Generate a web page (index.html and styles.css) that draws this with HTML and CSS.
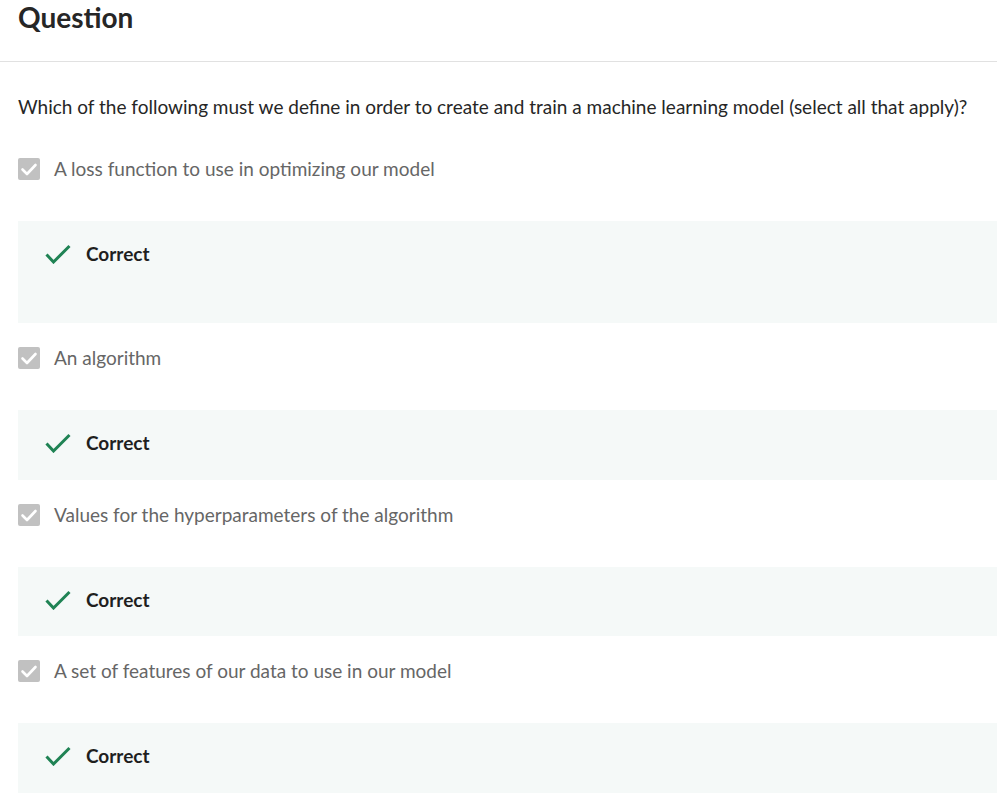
FILE: index.html
```html
<!DOCTYPE html>
<html lang="en">
<head>
<meta charset="utf-8">
<title>Question</title>
<link rel="stylesheet" href="styles.css">
</head>
<body>
<div class="page">
  <header class="head">
    <h2 class="title">Question</h2>
  </header>
  <div class="body">
    <p class="prompt">Which of the following must we define in order to create and train a machine learning model (select all that apply)?</p>

    <div class="option">
      <span class="box"><svg viewBox="0 0 22 22" width="22" height="22"><path d="M4.5 11.5l4.5 4.5 8.5-9" fill="none" stroke="#fff" stroke-width="2.6" stroke-linecap="round" stroke-linejoin="round"/></svg></span>
      <span class="label">A loss function to use in optimizing our model</span>
    </div>
    <div class="feedback tall">
      <div class="fb-row">
        <svg class="tick" viewBox="0 0 26 20" width="26" height="20"><path d="M1.5 10.5l7 7.5 16-16" fill="none" stroke="#1f8354" stroke-width="3"/></svg>
        <span class="fb-text">Correct</span>
      </div>
    </div>

    <div class="option">
      <span class="box"><svg viewBox="0 0 22 22" width="22" height="22"><path d="M4.5 11.5l4.5 4.5 8.5-9" fill="none" stroke="#fff" stroke-width="2.6" stroke-linecap="round" stroke-linejoin="round"/></svg></span>
      <span class="label">An algorithm</span>
    </div>
    <div class="feedback">
      <div class="fb-row">
        <svg class="tick" viewBox="0 0 26 20" width="26" height="20"><path d="M1.5 10.5l7 7.5 16-16" fill="none" stroke="#1f8354" stroke-width="3"/></svg>
        <span class="fb-text">Correct</span>
      </div>
    </div>

    <div class="option">
      <span class="box"><svg viewBox="0 0 22 22" width="22" height="22"><path d="M4.5 11.5l4.5 4.5 8.5-9" fill="none" stroke="#fff" stroke-width="2.6" stroke-linecap="round" stroke-linejoin="round"/></svg></span>
      <span class="label">Values for the hyperparameters of the algorithm</span>
    </div>
    <div class="feedback">
      <div class="fb-row">
        <svg class="tick" viewBox="0 0 26 20" width="26" height="20"><path d="M1.5 10.5l7 7.5 16-16" fill="none" stroke="#1f8354" stroke-width="3"/></svg>
        <span class="fb-text">Correct</span>
      </div>
    </div>

    <div class="option">
      <span class="box"><svg viewBox="0 0 22 22" width="22" height="22"><path d="M4.5 11.5l4.5 4.5 8.5-9" fill="none" stroke="#fff" stroke-width="2.6" stroke-linecap="round" stroke-linejoin="round"/></svg></span>
      <span class="label">A set of features of our data to use in our model</span>
    </div>
    <div class="feedback">
      <div class="fb-row">
        <svg class="tick" viewBox="0 0 26 20" width="26" height="20"><path d="M1.5 10.5l7 7.5 16-16" fill="none" stroke="#1f8354" stroke-width="3"/></svg>
        <span class="fb-text">Correct</span>
      </div>
    </div>
  </div>
</div>
</body>
</html>
```

FILE: styles.css
```css
* { box-sizing: border-box; }
html, body { margin: 0; padding: 0; background: #fff; }
body {
  font-family: Lato, "Open Sans", "Liberation Sans", sans-serif;
  color: #1f1f1f;
  overflow: hidden;
}
.page { width: 997px; }
.head {
  height: 62px;
  border-bottom: 1px solid #e1e1e1;
  padding: 0 18px;
}
.title {
  margin: 0;
  font-size: 28px;
  line-height: 34px;
  font-weight: 700;
  color: #262626;
}
.body { padding: 33px 0 0 18px; }
.prompt {
  margin: 0;
  font-size: 19px;
  line-height: 24px;
  color: #262626;
}
.option {
  display: flex;
  align-items: center;
  gap: 14px;
  height: 24px;
  margin-top: 38px;
}
.feedback + .option { margin-top: 23px; }
.box {
  width: 22px;
  height: 22px;
  border-radius: 2px;
  background: #c1c1c1;
  display: flex;
  flex: none;
}
.label {
  font-size: 19px;
  line-height: 24px;
  color: #666;
}
.feedback {
  margin-top: 40px;
  background: #f5f9f8;
  padding: 21px 28px 24px 27px;
  height: 69.5px;
}
.feedback.tall { height: 102px; }
.fb-row {
  display: flex;
  align-items: center;
  gap: 15px;
  height: 24px;
}
.tick { flex: none; }
.fb-text {
  font-size: 19px;
  line-height: 24px;
  font-weight: 700;
  color: #1f1f1f;
}
```
